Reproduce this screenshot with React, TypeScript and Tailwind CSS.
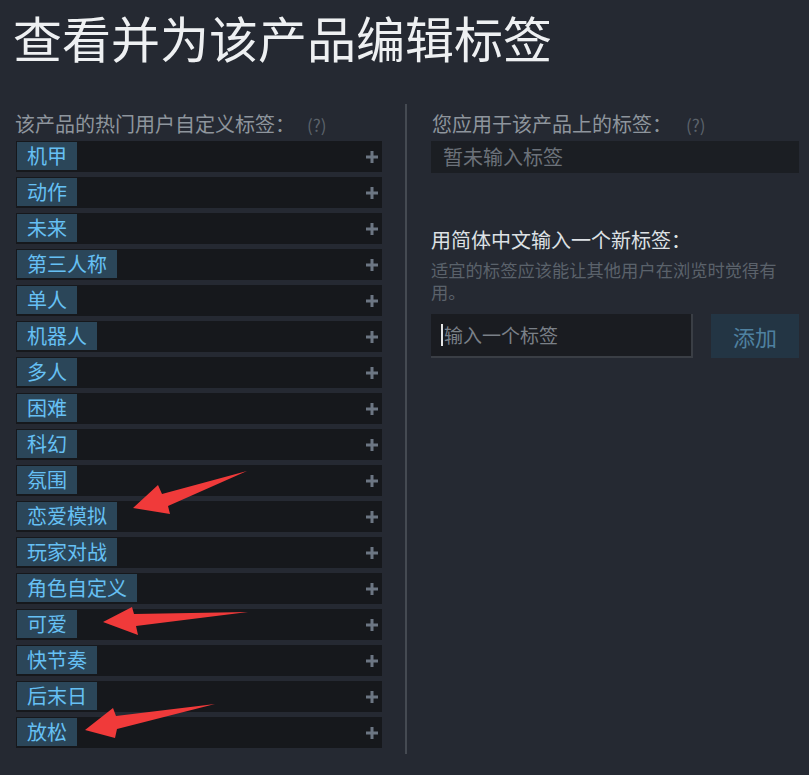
import React from 'react';

const font = { fontFamily: '"Noto Sans CJK SC", "Noto Sans", sans-serif' };

const tags = [
  '机甲',
  '动作',
  '未来',
  '第三人称',
  '单人',
  '机器人',
  '多人',
  '困难',
  '科幻',
  '氛围',
  '恋爱模拟',
  '玩家对战',
  '角色自定义',
  '可爱',
  '快节奏',
  '后末日',
  '放松',
];

function PlusIcon() {
  return (
    <svg width="12" height="12" viewBox="0 0 12 12" className="text-[#6c7683]">
      <path d="M4.5 0h3v4.5H12v3H7.5V12h-3V7.5H0v-3h4.5z" fill="currentColor" />
    </svg>
  );
}

function TagRow({ name }: { name: string }) {
  return (
    <div className="flex h-[31px] items-start justify-between bg-[#16181c]">
      <span className="ml-px mt-px flex h-[28px] items-center bg-[#2b4659] px-[10px] text-[20px] leading-none text-[#66c0f4]">
        {name}
      </span>
      <span className="mr-[4px] mt-[10px]">
        <PlusIcon />
      </span>
    </div>
  );
}

function Arrows() {
  // red annotation arrows drawn over the list
  const arrows = [
    '133,508 158,485 162,494 247,471 168,506 170,514',
    '103,622 132,607 134,614 248,612 136,626 138,635',
    '85,730 113,708 116,716 215,704 117,729 115,738',
  ];
  return (
    <svg className="pointer-events-none absolute left-0 top-0" width="809" height="775">
      {arrows.map((p, i) => (
        <polygon key={i} points={p} fill="#f03a3a" />
      ))}
    </svg>
  );
}

export default function App() {
  return (
    <div className="relative h-[775px] w-[809px] overflow-hidden bg-[#252932]" style={font}>
      <h1 className="pl-[13px] pt-[12px] text-[49px] font-normal leading-none text-[#eef0f2]">
        查看并为该产品编辑标签
      </h1>

      <div className="mt-[43px] flex">
        <div className="ml-[16px] w-[366px] pt-[10px]">
          <div className="flex h-[20px] items-center text-[20px] leading-none text-[#8e959d]">
            <span className="-ml-px">该产品的热门用户自定义标签：</span>
            <span className="ml-[12px] text-[17px] text-[#5c636b]">(?)</span>
          </div>
          <div className="mt-[7px] flex flex-col gap-[5px]">
            {tags.map((t) => (
              <TagRow key={t} name={t} />
            ))}
          </div>
        </div>

        <div className="ml-[23px] h-[650px] w-[2px] bg-[#454a52]" />

        <div className="ml-[24px] w-[368px] pt-[10px]">
          <div className="flex h-[20px] items-center text-[20px] leading-none text-[#8e959d]">
            <span className="ml-px">您应用于该产品上的标签：</span>
            <span className="ml-[14px] text-[17px] text-[#5c636b]">(?)</span>
          </div>
          <div className="mt-[7px] flex h-[32px] items-center bg-[#1b1e23] pl-[12px] text-[20px] text-[#6c727a]">
            暂未输入标签
          </div>

          <div className="mt-[57px] text-[20px] leading-none text-[#dde1e5]">用简体中文输入一个新标签：</div>
          <p className="mt-[9px] text-[17.3px] leading-[22px] text-[#5b626b]">
            适宜的标签应该能让其他用户在浏览时觉得有用。
          </p>
          <div className="mt-[11px] flex gap-[18px]">
            <div className="flex h-[44px] w-[262px] items-center border-b-2 border-r-2 border-[#3a3e45] bg-[#1a1c21] pl-[10px] text-[19px] text-[#7a8088]">
              <span className="mr-[1px] h-[22px] w-[2px] bg-[#e6e6e6]" />
              输入一个标签
            </div>
            <button className="flex h-[44px] w-[88px] items-center justify-center bg-[#233544] text-[22px] text-[#4f81a0]">
              添加
            </button>
          </div>
        </div>
      </div>

      <Arrows />
    </div>
  );
}
